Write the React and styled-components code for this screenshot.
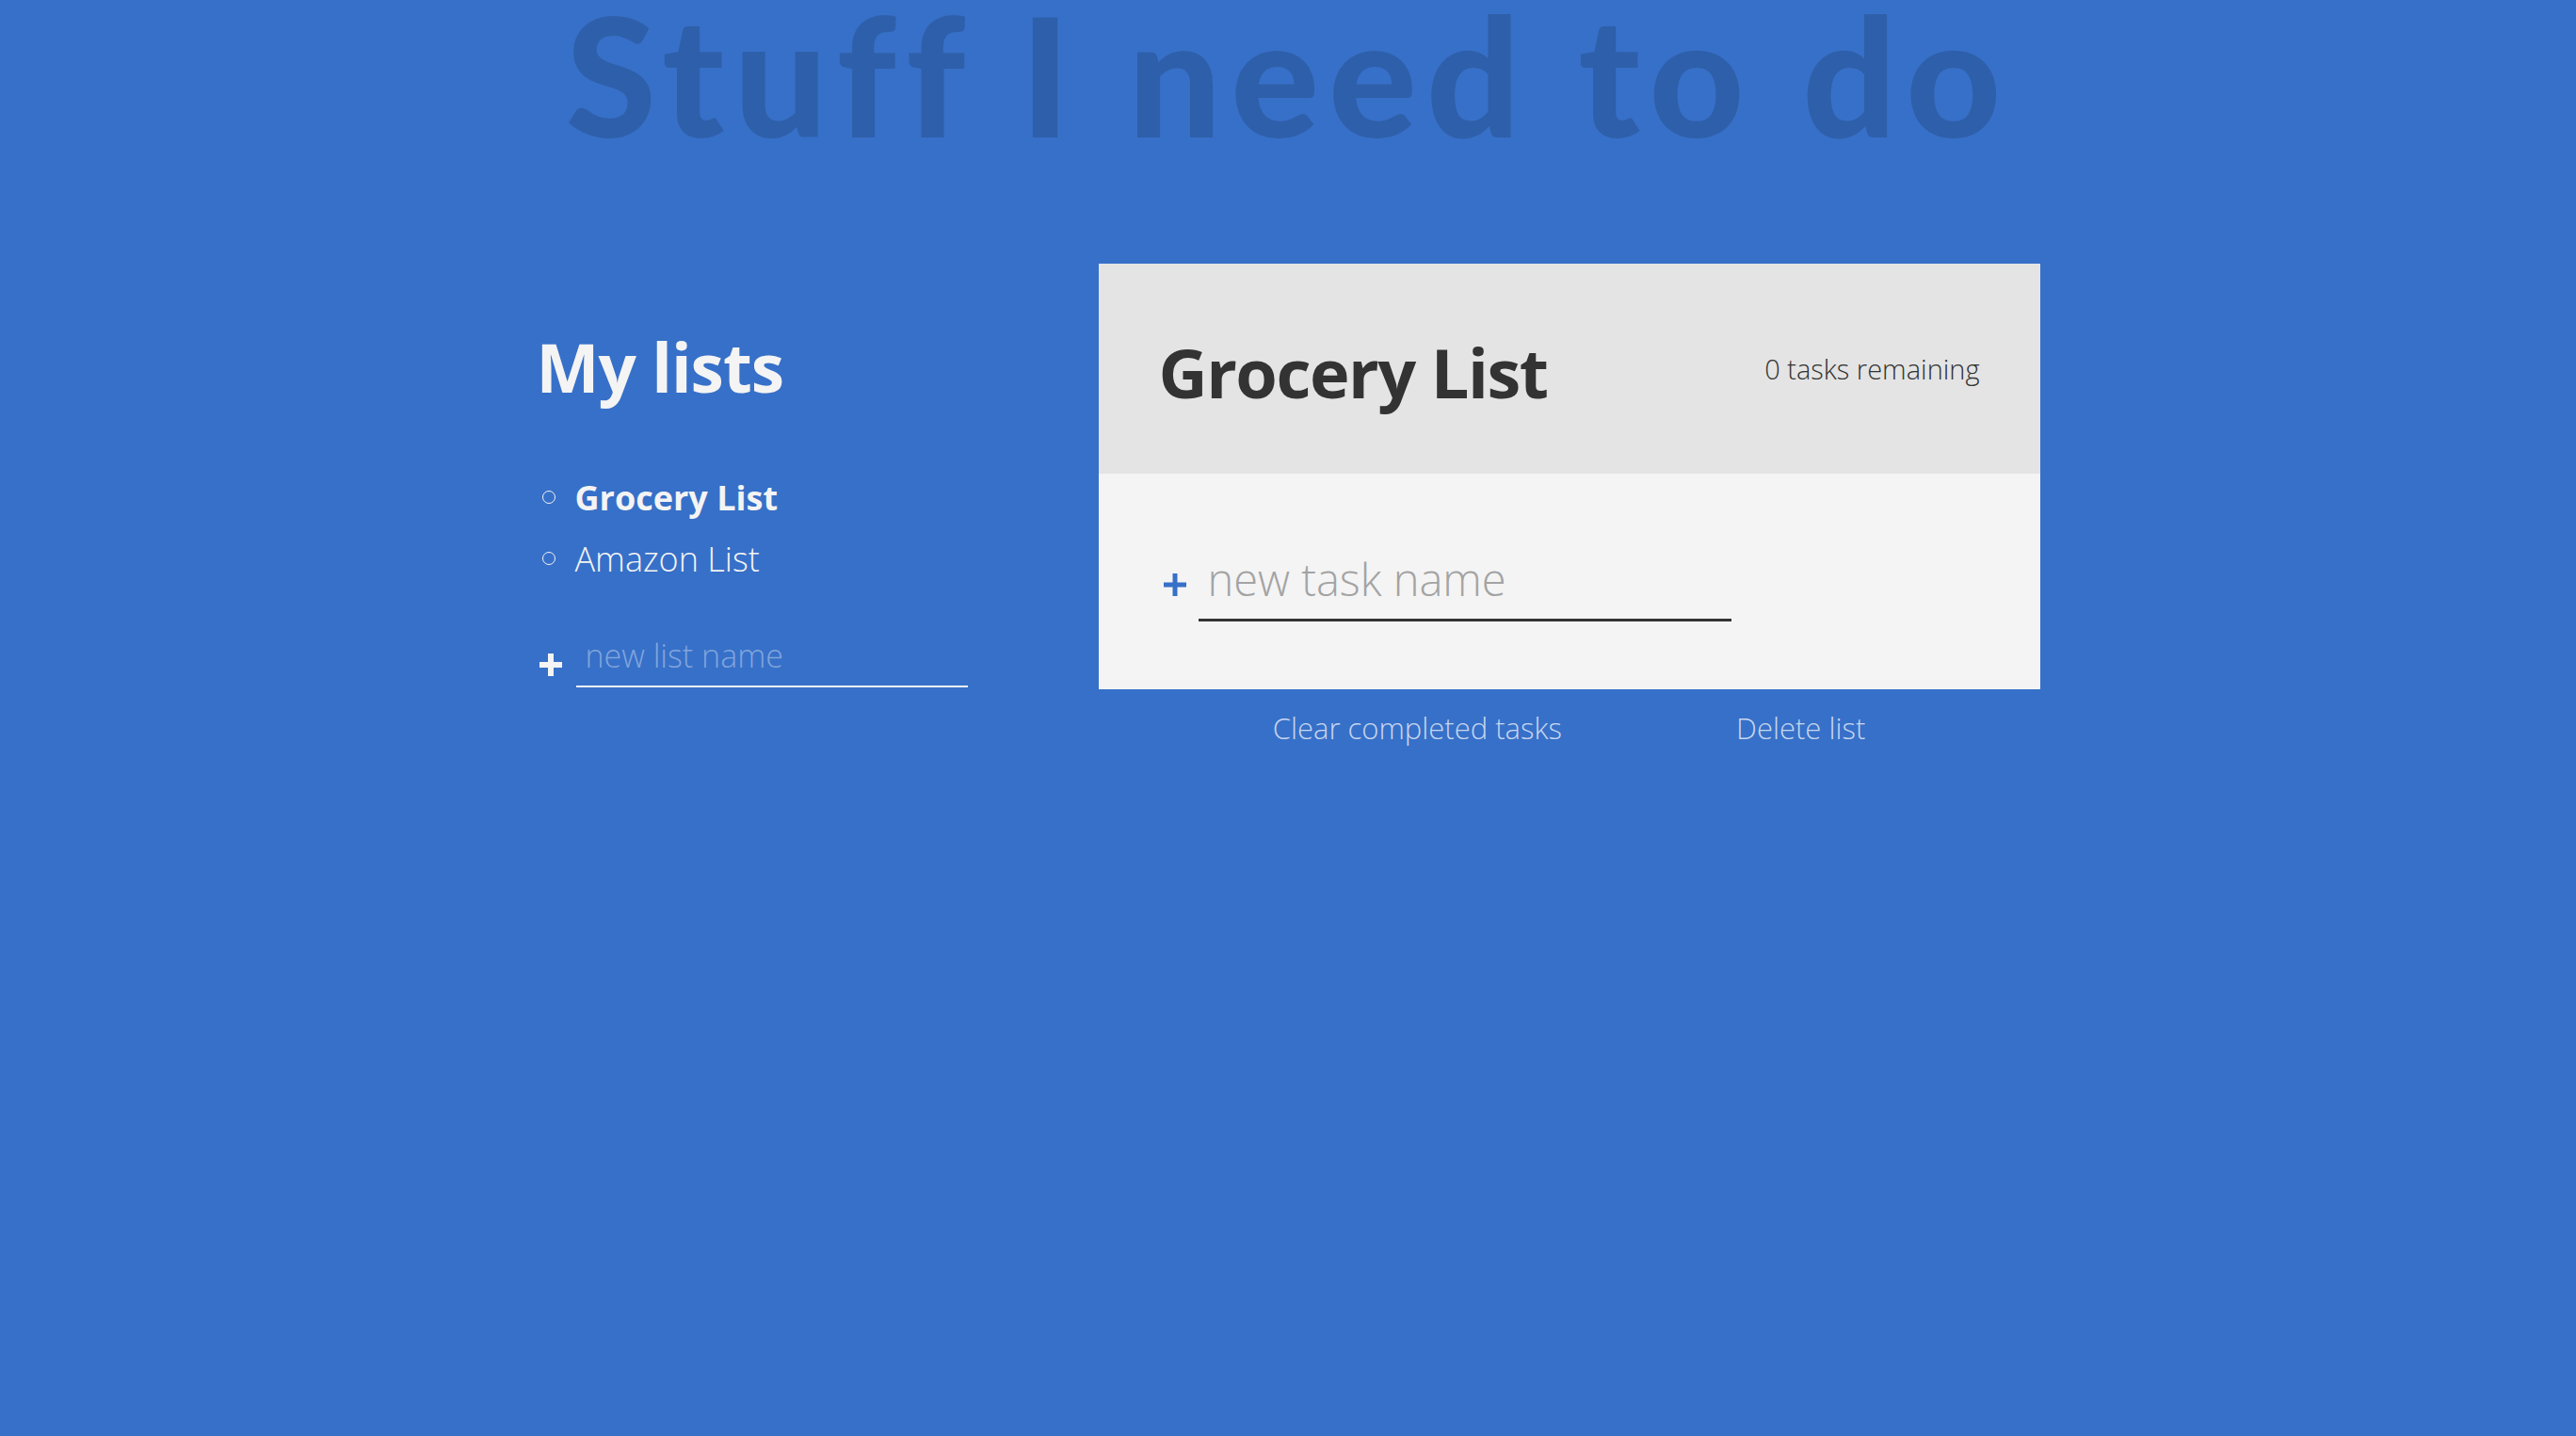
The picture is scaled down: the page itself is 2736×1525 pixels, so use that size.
import React, { useState } from 'react'
import styled, { createGlobalStyle } from 'styled-components'

const GlobalStyle = createGlobalStyle`
    html, body {
        margin: 0;
        padding: 0;
        background: #3770c8;
    }
    body {
        font-family: "Open Sans", "Noto Sans", sans-serif;
        color: #f4f4f4;
    }
    * {
        box-sizing: border-box;
    }
`

const Page = styled.div`
    min-height: 100vh;
    background: #3770c8;
`

const Title = styled.h1`
    margin: 0;
    font-family: Lato, "Open Sans", sans-serif;
    font-weight: 900;
    font-size: 175px;
    line-height: 0.9;
    text-align: center;
    color: rgba(0, 0, 0, 0.15);
    letter-spacing: 10px;
`

const Board = styled.main`
    display: grid;
    grid-template-columns: 597px 1000px;
    justify-content: center;
    margin-top: 122px;
`

const Lists = styled.section`
    padding-top: 67px;
`

const ListsHeading = styled.h2`
    margin: 0;
    font-size: 71px;
    font-weight: 700;
    line-height: 1.2;
    letter-spacing: -1px;
`

const ListNames = styled.ul`
    list-style: none;
    margin: 64px 0 0;
    padding: 0;
`

const ListName = styled.li`
    display: flex;
    align-items: center;
    gap: 21px;
    padding-left: 6px;
    font-size: 36px;
    line-height: 65px;
    font-weight: ${(props) => (props.active ? 700 : 300)};
    cursor: pointer;
`

const Bullet = styled.span`
    width: 14px;
    height: 14px;
    border: 1.5px solid #f4f4f4;
    border-radius: 50%;
    flex-shrink: 0;
`

const NewForm = styled.form`
    display: flex;
    align-items: flex-end;
    gap: ${(props) => props.gap}px;
    margin-top: ${(props) => props.offset || 0}px;
`

const PlusButton = styled.button`
    display: flex;
    align-items: center;
    justify-content: center;
    width: ${(props) => props.size}px;
    padding: 0;
    margin-bottom: ${(props) => props.lift}px;
    border: none;
    background: none;
    color: ${(props) => props.color};
    cursor: pointer;
`

const NewInput = styled.input`
    width: ${(props) => props.width}px;
    padding: 0 10px ${(props) => props.pad}px;
    border: none;
    border-bottom: ${(props) => props.line};
    background: transparent;
    outline: none;
    font-family: "Open Sans", sans-serif;
    font-weight: 300;
    font-size: ${(props) => props.fontSize}px;
    line-height: 1.2;
    color: inherit;
    &::placeholder {
        color: ${(props) => props.hint};
        opacity: 1;
    }
`

const Card = styled.section`
    display: flex;
    flex-direction: column;
`

const CardHeader = styled.header`
    display: flex;
    align-items: center;
    justify-content: space-between;
    height: 223px;
    padding: 0 64px;
    background: #e4e4e4;
    color: #333;
`

const CardTitle = styled.h2`
    margin: 0;
    padding-top: 8px;
    font-size: 72px;
    font-weight: 700;
    line-height: 1.2;
    letter-spacing: -1.5px;
`

const Remaining = styled.p`
    margin: 0;
    font-size: 29px;
    font-weight: 300;
`

const CardBody = styled.div`
    padding: 84px 64px 72px;
    background: #f4f4f4;
    color: #333;
`

const Actions = styled.div`
    display: flex;
    justify-content: space-evenly;
    padding-top: 20px;
`

const ActionButton = styled.button`
    padding: 0;
    border: none;
    background: none;
    font-family: "Open Sans", sans-serif;
    font-weight: 300;
    font-size: 31px;
    color: rgba(255, 255, 255, 0.72);
    cursor: pointer;
`

const Plus = ({ size, stroke }) => (
    <svg width={size} height={size} viewBox="0 0 24 24">
        <rect x={12 - stroke / 2} y="0" width={stroke} height="24" fill="currentColor" />
        <rect x="0" y={12 - stroke / 2} width="24" height={stroke} fill="currentColor" />
    </svg>
)

const lists = [
    { id: 1, name: 'Grocery List' },
    { id: 2, name: 'Amazon List' },
]

export default function App() {
    const [selected, setSelected] = useState(1)
    const active = lists.find((l) => l.id === selected)

    return (
        <Page>
            <GlobalStyle />
            <Title>Stuff I need to do</Title>
            <Board>
                <Lists>
                    <ListsHeading>My lists</ListsHeading>
                    <ListNames>
                        {lists.map((list) => (
                            <ListName
                                key={list.id}
                                active={list.id === selected}
                                onClick={() => setSelected(list.id)}
                            >
                                <Bullet />
                                {list.name}
                            </ListName>
                        ))}
                    </ListNames>
                    <NewForm gap={12} offset={50} onSubmit={(e) => e.preventDefault()}>
                        <PlusButton size={30} lift={12} color="#f4f4f4" type="submit">
                            <Plus size={24} stroke={6} />
                        </PlusButton>
                        <NewInput
                            width={416}
                            pad={12}
                            fontSize={34}
                            line="2px solid #f4f4f4"
                            hint="rgba(255, 255, 255, 0.38)"
                            placeholder="new list name"
                        />
                    </NewForm>
                </Lists>
                <div>
                    <Card>
                        <CardHeader>
                            <CardTitle>{active.name}</CardTitle>
                            <Remaining>0 tasks remaining</Remaining>
                        </CardHeader>
                        <CardBody>
                            <NewForm gap={8} onSubmit={(e) => e.preventDefault()}>
                                <PlusButton size={34} lift={27} color="#3770c8" type="submit">
                                    <Plus size={24} stroke={5} />
                                </PlusButton>
                                <NewInput
                                    width={566}
                                    pad={14}
                                    fontSize={47}
                                    line="3px solid #333"
                                    hint="#a3a3a3"
                                    placeholder="new task name"
                                />
                            </NewForm>
                        </CardBody>
                    </Card>
                    <Actions>
                        <ActionButton>Clear completed tasks</ActionButton>
                        <ActionButton>Delete list</ActionButton>
                    </Actions>
                </div>
            </Board>
        </Page>
    )
}
